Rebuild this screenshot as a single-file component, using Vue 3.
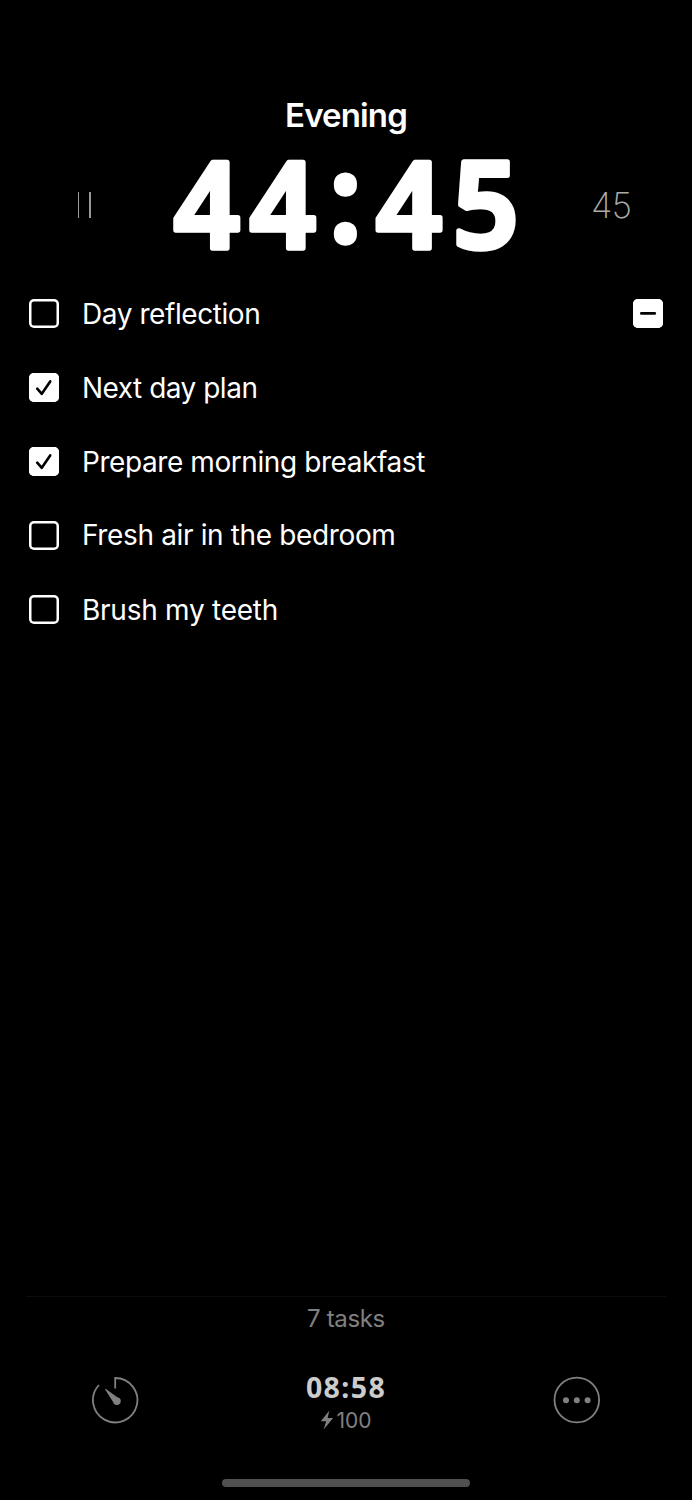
<script setup>
const tasks = [
  { label: 'Day reflection', done: false, removable: true, cls: 't1' },
  { label: 'Next day plan', done: true, cls: 't2' },
  { label: 'Prepare morning breakfast', done: true, cls: 't3' },
  { label: 'Fresh air in the bedroom', done: false, cls: 't4' },
  { label: 'Brush my teeth', done: false, cls: 't5' },
]
</script>

<template>
  <main class="screen">
    <h1 class="title">Evening</h1>
    <section class="timer">
      <svg class="pause" width="16" height="28" viewBox="0 0 16 28">
        <rect x="1" y="1" width="1" height="26" />
        <rect x="12" y="1" width="2" height="26" />
      </svg>
      <svg class="clock" width="360" height="110" viewBox="0 0 360 110">
        <text transform="scale(0.97 1)" x="7 85.4 167.6 215.4 294.7" y="93.2 93.2 86.3 93.2 93.2">44:45</text>
      </svg>
      <span class="minutes">45</span>
    </section>

    <ul class="tasks">
      <li v-for="t in tasks" :key="t.label" class="task">
        <span class="box" :class="{ done: t.done }">
          <svg v-if="t.done" width="30" height="29" viewBox="0 0 30 29">
            <path d="M8.2 15.6 L12.8 20.8 L21.2 8.4" />
          </svg>
        </span>
        <span class="label" :class="t.cls">{{ t.label }}</span>
        <span v-if="t.removable" class="box done minus">
          <svg width="30" height="29" viewBox="0 0 30 29">
            <path d="M8.3 14.4 H21.8" />
          </svg>
        </span>
      </li>
    </ul>

    <footer class="footer">
      <p class="count">7 tasks</p>
      <div class="bar">
        <svg class="icon" width="50" height="50" viewBox="0 0 50 50">
          <path class="line" d="M25.2 13.5 V3 A22.2 22.2 0 1 1 9 10" />
          <path class="fill" d="M15.1 14.4 Q15 13.6 15.9 14 L27.4 22.2 A3.9 3.9 0 1 1 23.1 27 Z" />
        </svg>
        <div class="status">
          <span class="time">08:58</span>
          <span class="battery">
            <svg width="14" height="20" viewBox="0 0 14 20">
              <path d="M9.4 0.4 L0.8 11.2 H6.2 L3.6 19.4 L13.2 8 H7.6 Z" />
            </svg>
            <span>100</span>
          </span>
        </div>
        <svg class="icon" width="50" height="50" viewBox="0 0 50 50">
          <circle class="line" cx="24.8" cy="25" r="22.3" />
          <circle class="fill" cx="14" cy="25.2" r="3" />
          <circle class="fill" cx="24.8" cy="25.2" r="3" />
          <circle class="fill" cx="35.6" cy="25.2" r="3" />
        </svg>
      </div>
      <div class="home"></div>
    </footer>
  </main>
</template>

<style>
body { background: #000; }
</style>

<style scoped>
.screen {
  box-sizing: border-box;
  width: 692px;
  height: 1500px;
  padding-top: 95px;
  background: #000;
  color: #fff;
  font-family: Inter, "Liberation Sans", sans-serif;
  display: flex;
  flex-direction: column;
  overflow: hidden;
}
.title {
  margin: 0;
  height: 40px;
  line-height: 40px;
  text-align: center;
  font-size: 33px;
  font-weight: 600;
  letter-spacing: -0.85px;
}
.timer {
  display: grid;
  grid-template-columns: 167px 360px 165px;
  height: 110px;
  margin-top: 20px;
}
.pause { margin: 36px 0 0 77px; fill: #999; }
.clock { overflow: visible; }
.clock text {
  font: 600 119px "Noto Sans", "Open Sans", sans-serif;
  fill: #fff;
  stroke: #fff;
  stroke-width: 5.5px;
  stroke-linejoin: round;
}
.minutes {
  margin: 29px 0 0 64px;
  line-height: 42px;
  font-size: 35px;
  font-weight: 200;
  letter-spacing: -0.6px;
  color: #aaa;
}
.tasks {
  list-style: none;
  margin: 12px 0 0;
  padding: 0 29px;
}
.task {
  display: flex;
  align-items: center;
  height: 74px;
}
.box {
  width: 30px;
  height: 29px;
  margin-bottom: 1px;
  box-shadow: inset 0 0 0 2.5px #fff;
  border-radius: 5px;
  flex: none;
}
.box.done { background: #fff; }
.box svg { display: block; }
.box path {
  fill: none;
  stroke: #000;
  stroke-width: 2.6;
  stroke-linecap: round;
  stroke-linejoin: round;
}
.label {
  margin-left: 23px;
  font-size: 28px;
  line-height: 34px;
  white-space: nowrap;
}
.t1 { letter-spacing: -0.43px; }
.t2 { letter-spacing: -0.5px; }
.t3 { letter-spacing: -0.42px; }
.t4 { letter-spacing: -0.36px; padding-bottom: 2px; }
.t5 { letter-spacing: -0.26px; }
.minus { margin-left: auto; }
.footer {
  margin: auto 26px 0;
  height: 204px;
  border-top: 1px solid #0c0c0c;
  box-sizing: border-box;
}
.count {
  margin: 6px 0 0;
  line-height: 32px;
  text-align: center;
  font-size: 24px;
  letter-spacing: -0.35px;
  color: #808080;
}
.bar {
  display: flex;
  justify-content: space-between;
  margin: 40px 64px 0;
  height: 62px;
}
.line { fill: none; stroke: #808080; stroke-width: 1.8; }
.fill { fill: #808080; }
.status {
  display: flex;
  flex-direction: column;
  align-items: center;
}
.time {
  font: 700 28.5px/28px "Noto Sans", "Open Sans", sans-serif;
  letter-spacing: 1.4px;
  color: #ccc;
  margin-top: -2px;
}
.battery {
  display: flex;
  align-items: center;
  gap: 2px;
  height: 26px;
  margin-top: 6px;
  font-size: 21px;
  color: #808080;
}
.battery path { fill: #808080; }
.home {
  width: 248px;
  height: 8px;
  margin: 42px auto 0;
  border-radius: 4px;
  background: #505050;
}
</style>
